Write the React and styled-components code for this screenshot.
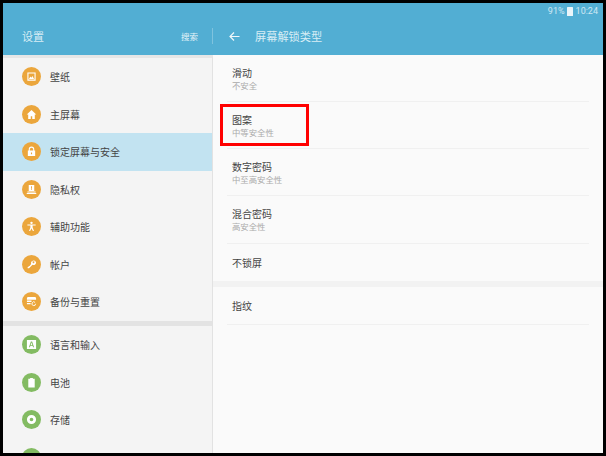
import React from "react";
import styled, { createGlobalStyle } from "styled-components";

const Global = createGlobalStyle`
  html, body { margin: 0; padding: 0; background: #000; }
  body { font-family: "Noto Sans CJK SC", "Roboto", sans-serif; overflow: hidden; }
`;

const Screen = styled.div`
  width: 606px; height: 456px; box-sizing: border-box; padding: 3px;
  background: #000; overflow: hidden;
`;
const Device = styled.div`
  width: 600px; height: 450px; display: flex; flex-direction: column;
  overflow: hidden; background: #fafafa;
`;
const Header = styled.header`
  height: 52px; flex: none; background: #52aed3; display: flex; flex-direction: column;
`;
const StatusBar = styled.div`
  height: 16px; flex: none; display: flex; align-items: center; justify-content: flex-end;
  padding-right: 5px; gap: 2.5px;
  font: 9px/1 Roboto, sans-serif; color: #cfe8f3;
`;
const BatteryIcon = styled.span`
  width: 6px; height: 9px; background: #eaf5fa; display: block; border-radius: 0.5px;
`;
const TitleBar = styled.div`
  flex: 1; display: flex; align-items: center; padding-bottom: 2px;
`;
const LeftTitle = styled.div`
  width: 210px; box-sizing: border-box; padding: 0 14px 0 19px; display: flex;
  align-items: center; justify-content: space-between; color: #d8edf5; font-size: 11px; height: 16px;
  border-right: 1px solid #7fc3de;
`;
const SearchLabel = styled.span` font-size: 8.5px; color: #e6f3f8; `;
const RightTitle = styled.div`
  display: flex; align-items: center; color: #d8edf5; font-size: 11.2px; padding-left: 16px; gap: 15px;
`;
const Body = styled.div` flex: 1; display: flex; min-height: 0; `;
const Sidebar = styled.nav`
  width: 209px; flex: none; background: #f4f4f4; border-right: 1px solid #e2e2e2;
  border-top: 3px solid #e6e6e6; overflow: hidden;
`;
const NavRow = styled.div`
  height: 37.5px; display: flex; align-items: center; padding-left: 19px; gap: 9px;
  box-sizing: border-box;
  background: ${p => (p.$active ? "#c2e3f1" : "transparent")};
  font-size: 10px; color: #444;
`;
const IconDot = styled.span`
  width: 19px; height: 19px; border-radius: 50%; flex: none; display: flex;
  align-items: center; justify-content: center; background: ${p => p.$color};
`;
const NavGap = styled.div` height: 5.5px; background: #e3e3e3; `;
const Content = styled.main` flex: 1; background: #fafafa; `;
const Option = styled.div`
  position: relative; height: ${p => p.$h}px; margin: 0 14px; box-sizing: border-box;
  padding-left: 5px; display: flex; flex-direction: column; justify-content: center;
  border-bottom: ${p => (p.$plain ? "none" : "1px solid #f0f0f0")};
`;
const OptionTitle = styled.div` font-size: 10px; line-height: 14px; color: #444; `;
const OptionSub = styled.div` font-size: 8.4px; line-height: 11px; color: #aaa; `;
const Highlight = styled.div`
  position: absolute; left: -7px; top: 2px; width: 89px; height: 42px;
  box-sizing: border-box; border: 3px solid #f00;
`;
const ContentGap = styled.div` height: 6px; background: #f2f2f2; `;

const I = ({ children }) => (
  <svg width="11" height="11" viewBox="0 0 12 12" fill="#fff">{children}</svg>
);
const O = "#eba63c";
const G = "#83bb62";

const nav1 = [
  ["壁纸", <I><path fillRule="evenodd" d="M1.500 1.500h9v9h-9zM2.700 2.700v6.600h6.600V2.700z" /><path d="M3.200 8.600 4.800 6l1.100 1.300L7 5.500l1.800 3.100z" /></I>],
  ["主屏幕", <I><path d="M6 1 .8 6h1.600v5h2.800V7.800h1.600V11h2.800V6h1.600z" /></I>],
  ["锁定屏幕与安全", <I><path fillRule="evenodd" d="M3 5V3.600a3 3 0 0 1 6 0V5h1v6H2V5zm1.200 0h3.600V3.600a1.800 1.800 0 0 0-3.600 0zM5.400 7v2h1.200V7z" /></I>],
  ["隐私权", <I><path fillRule="evenodd" d="M3 1h6v6.500H3zM5.500 2.500v2.600h1V2.500zm0 3.100v.9h1v-.9z" /><path d="M1.500 8.300h9v1.100h-9zM.8 9.900h10.400V11H.8z" /></I>],
  ["辅助功能", <I><circle cx="6" cy="2" r="1.300" /><path d="M1.500 3.800h9v1.100H7.200v2l1.500 4H7.500L6 8 4.500 11H3.300l1.500-4v-2.100H1.500z" /></I>],
  ["帐户", <I><path fillRule="evenodd" d="M11 3.800a2.800 2.800 0 0 1-3.900 2.600L3.300 10.200H1.800V8.700l1-.1.1-1 1-.1L5.600 5.400A2.800 2.800 0 1 1 11 3.800zM8.200 2.500a1 1 0 1 0 .01 0z" /></I>],
  ["备份与重置", <I><path d="M2.500 1h7A1.500 1.500 0 0 1 11 2.500V4H1V2.500A1.500 1.500 0 0 1 2.500 1z" /><path d="M1 5h5v1.500H1zM1 7.500h4V9H1z" /><path fill="none" stroke="#fff" strokeWidth="1" d="M10.500 8.500a2 2 0 1 1-.6-1.500" /></I>],
];
const nav2 = [
  ["语言和输入", <I><path fillRule="evenodd" d="M1 1h10v10H1zM5.300 2.800 3.200 9h1.100l.4-1.300h2.600L7.700 9h1.100L6.700 2.800zM5 6.800 6 3.900l1 2.900z" /></I>],
  ["电池", <I><path d="M4.500 1h3v1h2v9.500h-7V2h2z" /></I>],
  ["存储", <I><path fillRule="evenodd" d="M6 1a5 5 0 1 1 0 10A5 5 0 0 1 6 1zm0 3a2 2 0 1 0 0 4 2 2 0 0 0 0-4z" /></I>],
  ["", null],
];

const NavItem = ({ label, icon, color, active }) => (
  <NavRow $active={active}>
    <IconDot $color={color}>{icon}</IconDot>
    {label}
  </NavRow>
);

export default function App() {
  return (
    <Screen>
      <Global />
      <Device>
        <Header>
          <StatusBar>
            91%<BatteryIcon />10:24
          </StatusBar>
          <TitleBar>
            <LeftTitle>
              设置<SearchLabel>搜索</SearchLabel>
            </LeftTitle>
            <RightTitle>
              <svg width="11" height="11" viewBox="0 0 11 11" fill="none" stroke="#eef7fb" strokeWidth="1.2">
                <path d="M10.500 5.500H1M5 1.500l-4 4 4 4" />
              </svg>
              屏幕解锁类型
            </RightTitle>
          </TitleBar>
        </Header>
        <Body>
          <Sidebar>
            {nav1.map(([l, ic], i) => (
              <NavItem key={l} label={l} icon={ic} color={O} active={i === 2} />
            ))}
            <NavGap />
            {nav2.map(([l, ic], i) => (
              <NavItem key={i} label={l} icon={ic} color={G} />
            ))}
          </Sidebar>
          <Content>
            <Option $h={47}>
              <OptionTitle>滑动</OptionTitle>
              <OptionSub>不安全</OptionSub>
            </Option>
            <Option $h={47}>
              <Highlight />
              <OptionTitle>图案</OptionTitle>
              <OptionSub>中等安全性</OptionSub>
            </Option>
            <Option $h={47}>
              <OptionTitle>数字密码</OptionTitle>
              <OptionSub>中至高安全性</OptionSub>
            </Option>
            <Option $h={48}>
              <OptionTitle>混合密码</OptionTitle>
              <OptionSub>高安全性</OptionSub>
            </Option>
            <Option $h={37} $plain>
              <OptionTitle>不锁屏</OptionTitle>
            </Option>
            <ContentGap />
            <Option $h={38}>
              <OptionTitle>指纹</OptionTitle>
            </Option>
          </Content>
        </Body>
      </Device>
    </Screen>
  );
}
